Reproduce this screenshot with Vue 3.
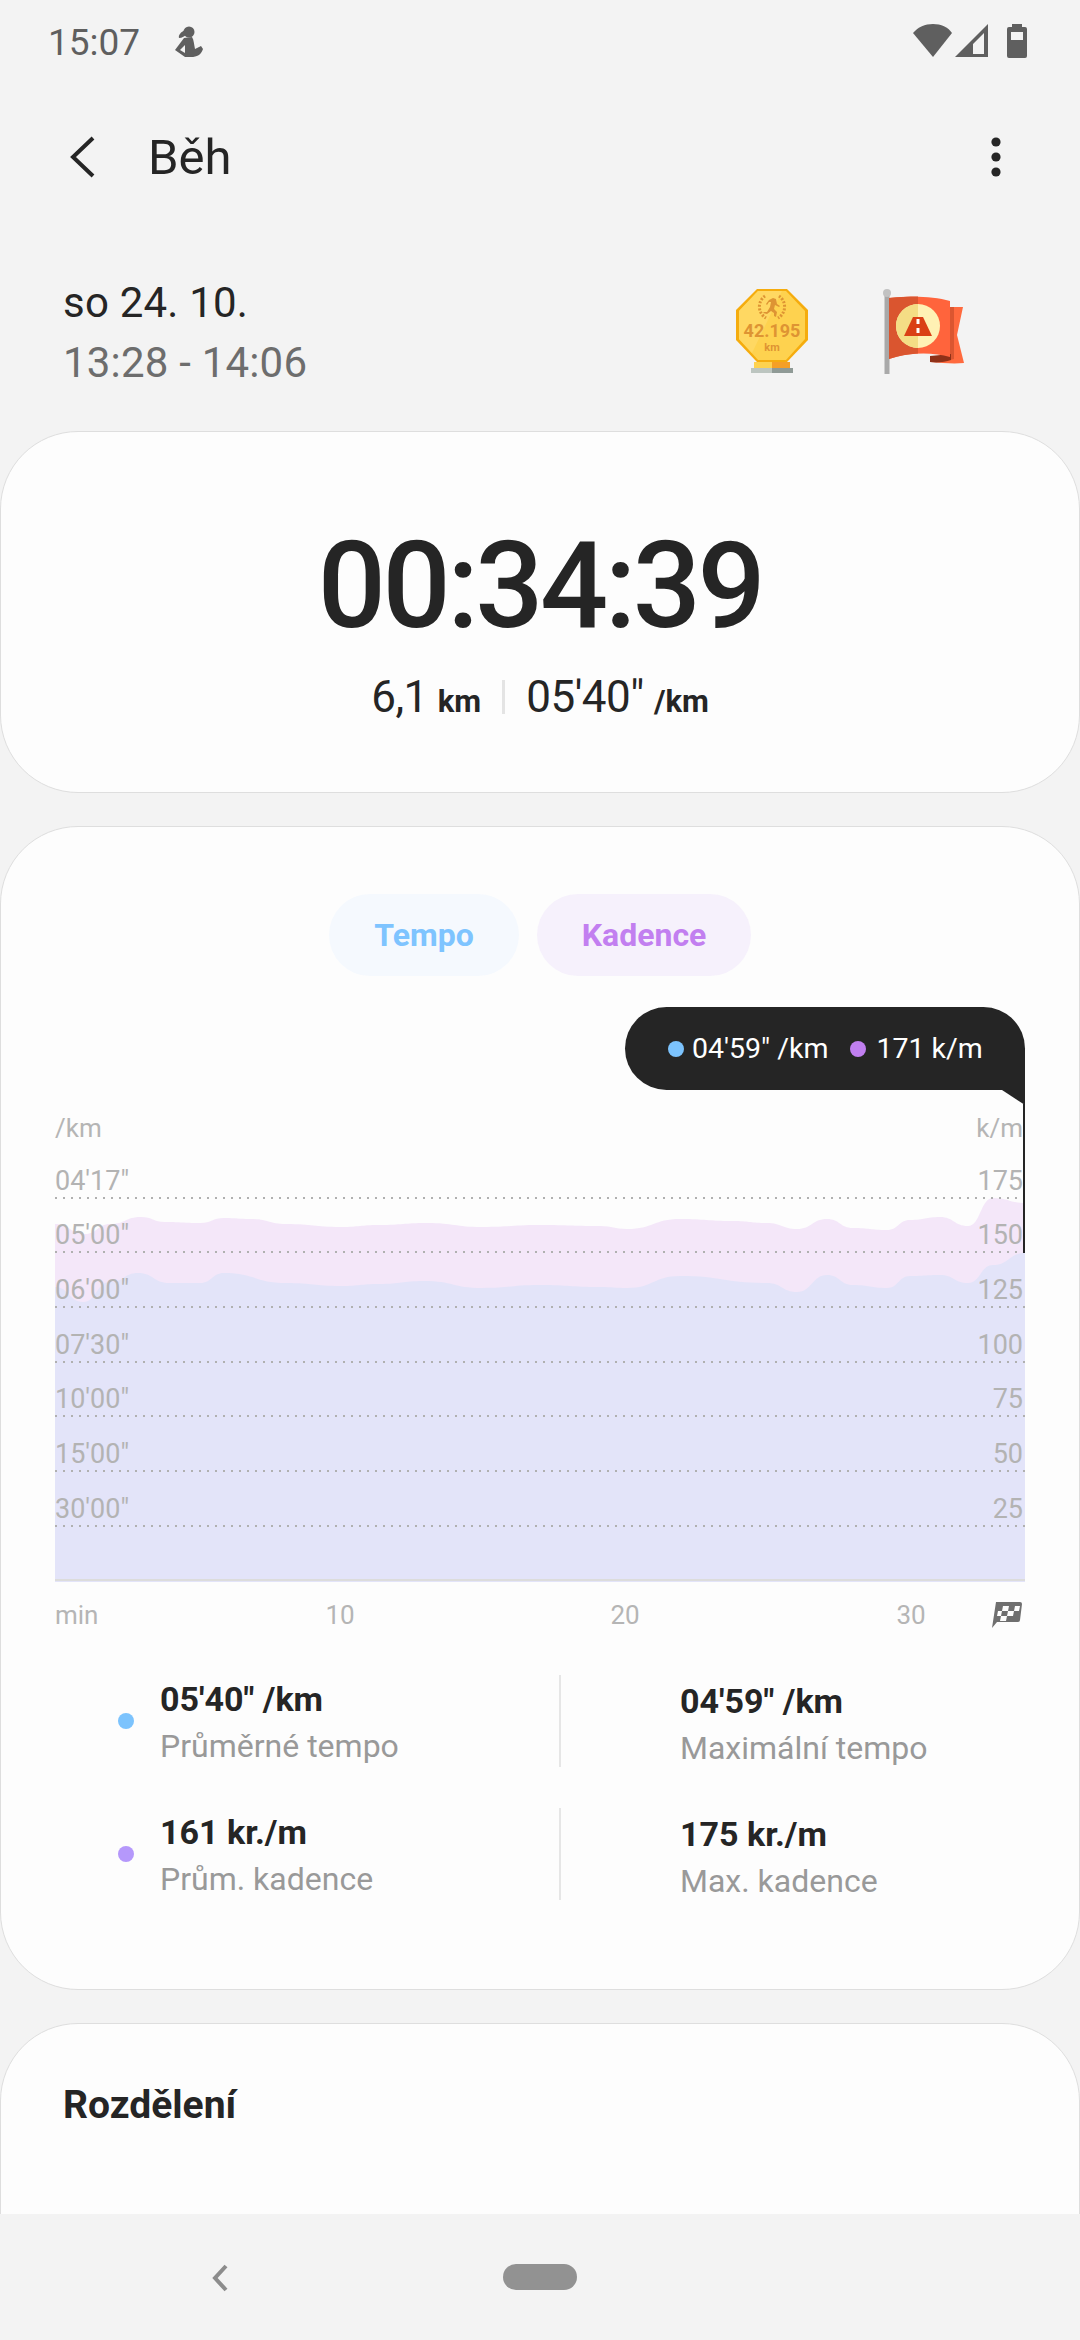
<template>
  <div class="phone">
    <div class="scroll">
      <div class="status">
        <span class="clock">15:07</span>
        <svg class="runner" width="30" height="32" viewBox="0 0 30 32" fill="#5f5f5f">
          <circle cx="16" cy="6" r="5.500" />
          <path d="M12 4C8 6 5 9 6 12c3 0 6-2 8-4z" />
          <path d="M11 12l8-1c2 3 2 8 3 12l6-3 2 3c-2 6-6 8-12 8h-6L2 24l6-8z" />
          <path d="M7 24l5-5v8z" fill="#f3f3f3" />
        </svg>
        <span class="status-gap"></span>
        <svg class="status-icons" width="114" height="34" viewBox="0 0 114 34" fill="#5f5f5f">
          <path d="M0 9C5 3 12 0 20 0s15 3 19 9L20 33z" />
          <path d="M42 33 75 0v33zM60 30h11V9L60 20z" fill-rule="evenodd" />
          <path d="M99 3V0h10v3h3a2 2 0 0 1 2 2v27a2 2 0 0 1-2 2H96a2 2 0 0 1-2-2V5a2 2 0 0 1 2-2z" />
          <rect x="98" y="8" width="12" height="8" fill="#f3f3f3" />
        </svg>
      </div>

      <div class="appbar">
        <svg width="30" height="44" viewBox="0 0 30 44" fill="none" stroke="#252525" stroke-width="4">
          <path d="M27 3 7 22l20 19" />
        </svg>
        <span class="title">Běh</span>
        <svg class="more" width="12" height="44" viewBox="0 0 12 44" fill="#252525">
          <circle cx="6" cy="7" r="4.600" />
          <circle cx="6" cy="22" r="4.600" />
          <circle cx="6" cy="37" r="4.600" />
        </svg>
      </div>

      <div class="meta">
        <div class="meta-text">
          <div class="date">so 24. 10.</div>
          <div class="time">13:28 - 14:06</div>
        </div>
        <svg width="72" height="84" viewBox="0 0 72 84">
          <path d="M21 0h30l21 21v30L51 73H21L0 51V21z" fill="#f5ac0e" />
          <path d="M22 2h28l19 20v28L50 71H22L3 50V22z" fill="#fed24f" />
          <path d="M22 2h24L16 64 3 50V22z" fill="#ffd862" />
          <path d="M29 7a13 13 0 0 0 1 22M43 7a13 13 0 0 1-1 22" fill="none" stroke="#de9433" stroke-width="3" stroke-dasharray="2 1.500" />
          <path d="M37 9l3 1 1 5 3 2-1 1-4-2-1 4 3 3-1 5-2-1 0-3-3-2-4 3-4-1 1-1 3 0 3-5 1-5-2 0-2 3-1-1 3-4z" fill="#de9433" />
          <text x="36" y="48" text-anchor="middle" class="medal-big">42.195</text>
          <text x="36" y="62" text-anchor="middle" class="medal-small">km</text>
          <rect x="18" y="73" width="18" height="6" fill="#fed24f" />
          <rect x="36" y="73" width="18" height="6" fill="#f59f26" />
          <rect x="15" y="79" width="21" height="5" fill="#bcc5c0" />
          <rect x="36" y="79" width="21" height="5" fill="#8f9a96" />
        </svg>
        <svg class="flag" width="81" height="86" viewBox="0 0 81 86">
          <rect x="1.500" y="6" width="5" height="80" fill="#a9a9a9" />
          <circle cx="4" cy="5" r="4" fill="#c2c2c2" />
          <path d="M67 19H80L74 47l7 28c-11 1-21 0-34-1v-6h20z" fill="#ff6a3e" />
          <path d="M67 19h4v52l-4 1z" fill="#db5630" />
          <path d="M47 68v6c8 1 15 0 21-2v-6z" fill="#8f3118" />
          <path d="M6 10c20-2 44-2 61 3v56C50 64 26 64 6 71z" fill="#ff643c" />
          <path d="M6 10c10-1 19-1.500 29-1.500v57C25 66 15 68 6 71z" fill="#da552f" />
          <circle cx="35" cy="38" r="22" fill="#fff1b4" />
          <path d="M35 16a22 22 0 0 0 0 44z" fill="#f4dd85" />
          <path d="M30 29h10l9 19H21z" fill="#da3f15" />
          <rect x="33.500" y="31" width="3" height="5" fill="#fff" />
          <rect x="33.500" y="40" width="3" height="5" fill="#fff" />
        </svg>
      </div>

      <section class="card duration">
        <div class="elapsed">00:34:39</div>
        <div class="summary">
          <span class="big">6,1</span>
          <span class="unit">km</span>
          <i class="summary-sep"></i>
          <span class="big">05'40"</span>
          <span class="unit">/km</span>
        </div>
      </section>

      <section class="card graph">
        <div class="pills">
          <span class="pill tempo">Tempo</span>
          <span class="pill kadence">Kadence</span>
        </div>

        <div class="chart">
          <div class="tip">
            <i class="dot blue"></i>
            <span>04'59" /km</span>
            <i class="dot purple"></i>
            <span>171 k/m</span>
          </div>
          <div class="units">
            <span>/km</span>
            <span>k/m</span>
          </div>
          <div class="plot">
            <svg class="areas" width="970" height="384" viewBox="55 1198 970 384">
              <path :d="pinkPath" fill="#f4e7f9" />
              <path :d="lavenderPath" fill="#e3e4f9" />
            </svg>
            <div v-for="row in rows" :key="row.pace" class="grid-row">
              <span>{{ row.pace }}</span>
              <span>{{ row.cadence }}</span>
            </div>
            <div class="grid-foot"></div>
            <i class="cursor"></i>
          </div>
          <div class="axis">
            <span class="axis-min">min</span>
            <span class="axis-tick">10</span>
            <span class="axis-tick">20</span>
            <span class="axis-tick">30</span>
            <svg class="finish" width="30" height="27" viewBox="0 0 30 27">
              <path d="M4 1h24a2 2 0 0 1 2 2l-2 16a2 2 0 0 1-2 2H5l-5 6z" fill="#6f6f6f" />
              <path d="M11 5h6l-1 5h-6zM23 5h5l-1 5h-5zM10 10l-1 5H5l1-5zM16 10h6l-1 5h-6zM9 15h6l-1 5H8z" fill="#fdfdfd" />
            </svg>
          </div>
        </div>

        <div class="stats">
          <template v-for="stat in stats" :key="stat.left.label">
            <div class="stat-left">
              <i class="stat-dot" :style="{ background: stat.color }"></i>
              <div class="stat-text">
                <div class="stat-value">{{ stat.left.value }}</div>
                <div class="stat-label">{{ stat.left.label }}</div>
              </div>
            </div>
            <div class="stat-right">
              <div class="stat-value">{{ stat.right.value }}</div>
              <div class="stat-label">{{ stat.right.label }}</div>
            </div>
          </template>
        </div>
      </section>

      <section class="card splits">
        <h2>Rozdělení</h2>
      </section>
    </div>

    <nav class="navbar">
      <svg class="nav-back" width="18" height="28" viewBox="0 0 18 28" fill="none" stroke="#8c8c8c" stroke-width="4">
        <path d="M15 2 4 14l11 12" />
      </svg>
      <i class="nav-home"></i>
    </nav>
  </div>
</template>

<script setup>
const rows = [
  { pace: `04'17"`, cadence: '175' },
  { pace: `05'00"`, cadence: '150' },
  { pace: `06'00"`, cadence: '125' },
  { pace: `07'30"`, cadence: '100' },
  { pace: `10'00"`, cadence: '75' },
  { pace: `15'00"`, cadence: '50' },
  { pace: `30'00"`, cadence: '25' },
]

const stats = [
  {
    color: '#7cc3fd',
    left: { value: `05'40" /km`, label: 'Průměrné tempo' },
    right: { value: `04'59" /km`, label: 'Maximální tempo' },
  },
  {
    color: '#b598fb',
    left: { value: '161 kr./m', label: 'Prům. kadence' },
    right: { value: '175 kr./m', label: 'Max. kadence' },
  },
]

const pink = [
  [55, 1224], [85, 1234], [110, 1224], [141, 1217], [165, 1222], [200, 1223], [224, 1218], [251, 1219],
  [286, 1224], [341, 1227], [379, 1225], [427, 1223], [482, 1227], [540, 1225], [600, 1226], [627, 1229],
  [680, 1219], [733, 1221], [767, 1223], [797, 1229], [827, 1219], [853, 1228], [887, 1230], [910, 1220],
  [940, 1217], [968, 1226], [993, 1198], [1025, 1203],
]

const lavender = [
  [55, 1287], [83, 1302], [110, 1282], [138, 1273], [169, 1283], [200, 1283], [224, 1273], [286, 1283],
  [341, 1286], [379, 1284], [424, 1281], [482, 1288], [540, 1285], [600, 1287], [627, 1288], [680, 1276],
  [767, 1283], [797, 1292], [827, 1275], [853, 1285], [887, 1288], [910, 1276], [940, 1275], [968, 1283],
  [993, 1265], [1025, 1253],
]

// smooth the sampled curve and close it down to the chart floor
function area(points) {
  let d = `M55 1582V${points[0][1]}`
  for (let i = 1; i < points.length; i++) {
    const [x0, y0] = points[i - 1]
    const [x1, y1] = points[i]
    const mid = (x0 + x1) / 2
    d += `C${mid} ${y0} ${mid} ${y1} ${x1} ${y1}`
  }
  return `${d}V1582z`
}

const pinkPath = area(pink)
const lavenderPath = area(lavender)
</script>

<style>
html,
body {
  margin: 0;
  background: #f3f3f3;
}
</style>

<style scoped>
.phone {
  width: 1080px;
  height: 2340px;
  display: flex;
  flex-direction: column;
  overflow: hidden;
  background: #f3f3f3;
  font-family: Roboto, "Noto Sans", sans-serif;
  color: #252525;
}

.scroll {
  flex: 1;
  min-height: 0;
  overflow: hidden;
}

.status {
  height: 84px;
  padding: 0 53px 0 48px;
  display: flex;
  align-items: center;
  color: #5f5f5f;
}

.clock {
  font-size: 37px;
}

.runner {
  margin-left: 33px;
}

.status-gap {
  flex: 1;
}

.status-icons {
  margin-top: -2px;
}

.appbar {
  height: 146px;
  padding: 0 78px 0 66px;
  display: flex;
  align-items: center;
}

.title {
  flex: 1;
  margin-left: 52px;
  font-size: 49px;
}

.meta {
  height: 201px;
  padding: 0 116px 0 63px;
  display: flex;
  align-items: center;
}

.meta-text {
  flex: 1;
  margin-top: 4px;
}

.date,
.time {
  font-size: 42px;
  line-height: 60px;
  letter-spacing: 0.2px;
}

.time {
  color: #6d6d6d;
}

.medal-big {
  font: 700 18px Roboto, sans-serif;
  fill: #de9433;
}

.medal-small {
  font: 700 11px Roboto, sans-serif;
  fill: #de9433;
}

.flag {
  margin-left: 75px;
}

.card {
  box-sizing: border-box;
  background: #fdfdfd;
  border: 1px solid #dedede;
  border-radius: 78px;
  margin-bottom: 33px;
}

.duration {
  height: 362px;
  padding-top: 94px;
  text-align: center;
}

.elapsed {
  font-size: 120px;
  font-weight: 500;
  line-height: 120px;
  letter-spacing: -3.500px;
  font-variant-numeric: tabular-nums;
}

.summary {
  margin-top: 24px;
  display: flex;
  justify-content: center;
  align-items: baseline;
}

.big {
  font-size: 44px;
  line-height: 54px;
  letter-spacing: -0.5px;
}

.unit {
  margin-left: 10px;
  font-size: 31px;
  font-weight: 700;
}

.summary-sep {
  width: 3px;
  height: 34px;
  margin: 0 21px;
  background: #e4e4e4;
  align-self: center;
}

.graph {
  height: 1164px;
  padding: 67px 54px 0;
}

.pills {
  display: flex;
  justify-content: center;
  gap: 18px;
}

.pill {
  height: 82px;
  border-radius: 41px;
  display: flex;
  align-items: center;
  justify-content: center;
  font-size: 32px;
  font-weight: 700;
}

.tempo {
  width: 190px;
  background: #f5f9fe;
  color: #7ec4ff;
}

.kadence {
  width: 214px;
  background: #f6f1fc;
  color: #c27ff0;
}

.chart {
  position: relative;
  margin-top: 31px;
}

.tip {
  position: absolute;
  top: 0;
  right: 0;
  box-sizing: border-box;
  width: 400px;
  height: 83px;
  padding-left: 43px;
  display: flex;
  align-items: center;
  background: #252525;
  border-radius: 42px 42px 0 42px;
  color: #fff;
  font-size: 28.500px;
  z-index: 2;
}

.tip::after {
  content: "";
  position: absolute;
  right: 0;
  top: 83px;
  border-top: 15px solid #252525;
  border-left: 23px solid transparent;
}

.dot {
  width: 16px;
  height: 16px;
  margin-right: 8px;
  border-radius: 50%;
}

.blue {
  background: #7cc3fd;
}

.purple {
  margin-left: 22px;
  margin-right: 10px;
  background: #c17ff0;
}

.units {
  padding: 106px 2px 0 0;
  height: 31px;
  display: flex;
  justify-content: space-between;
  font-size: 26px;
  line-height: 30px;
  color: #b5b5b5;
}

.plot {
  position: relative;
}

.areas {
  position: absolute;
  left: 0;
  top: 54px;
  display: block;
}

.grid-row {
  position: relative;
  box-sizing: border-box;
  height: 54.67px;
  padding: 0 2px 4px 0;
  display: flex;
  justify-content: space-between;
  align-items: flex-end;
  background: linear-gradient(to right, #b0b0b0 2px, transparent 2px) left bottom / 8px 2px repeat-x;
  font-size: 27px;
  line-height: 28px;
  color: #b3b3b3;
}

.grid-foot {
  height: 52.500px;
}

.cursor {
  position: absolute;
  right: 0;
  top: -40px;
  height: 149px;
  width: 2px;
  background: #252525;
}

.axis {
  position: relative;
  height: 66px;
  border-top: 2px solid #dcdcdc;
  font-size: 26px;
  line-height: 68px;
  color: #b5b5b5;
}

.axis-tick {
  position: absolute;
  transform: translateX(-50%);
}

.axis-tick:nth-child(2) {
  left: 285px;
}

.axis-tick:nth-child(3) {
  left: 570px;
}

.axis-tick:nth-child(4) {
  left: 856px;
}

.finish {
  position: absolute;
  right: 3px;
  top: 20px;
}

.stats {
  margin-top: 28px;
  display: grid;
  grid-template-columns: 506px 1fr;
  row-gap: 39px;
}

.stat-left {
  display: flex;
  align-items: center;
  padding-left: 63px;
  height: 92px;
  border-right: 2px solid #e6e6e6;
}

.stat-right {
  height: 92px;
  padding-left: 119px;
}

.stat-text,
.stat-right {
  padding-top: 2px;
}

.stat-dot {
  width: 16px;
  height: 16px;
  border-radius: 50%;
  margin-right: 26px;
}

.stat-value {
  font-size: 34px;
  line-height: 48px;
  font-weight: 700;
}

.stat-label {
  font-size: 32px;
  line-height: 47px;
  color: #999;
}

.splits {
  height: 400px;
  padding: 59px 62px;
  margin: 0;
}

.splits h2 {
  margin: 0;
  font-size: 39px;
  line-height: 44px;
  font-weight: 700;
}

.navbar {
  position: relative;
  height: 126px;
  flex: none;
  display: flex;
  align-items: center;
  justify-content: center;
  background: #f3f3f3;
}

.nav-back {
  position: absolute;
  left: 211px;
  top: 50px;
}

.nav-home {
  width: 74px;
  height: 26px;
  border-radius: 13px;
  background: #929292;
}
</style>
